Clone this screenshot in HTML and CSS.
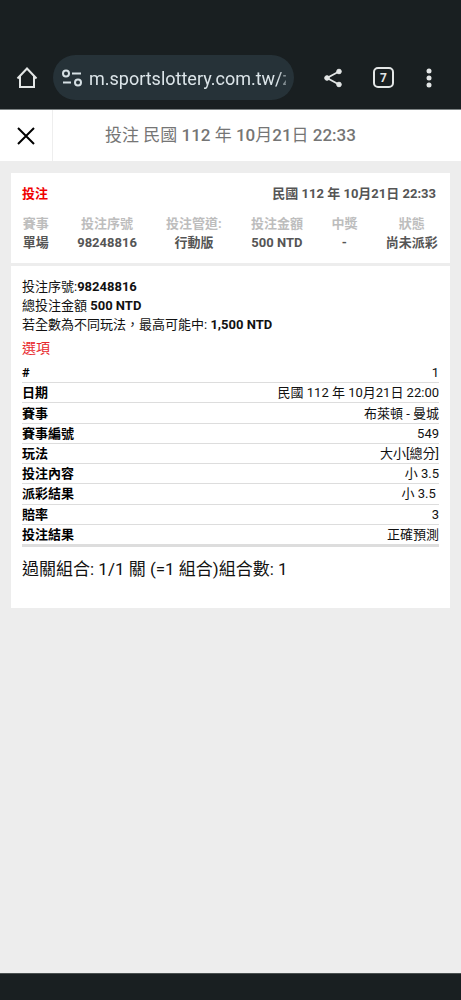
FILE: index.html
```html
<!DOCTYPE html>
<html lang="zh-Hant">
<head>
<meta charset="utf-8">
<meta name="viewport" content="width=device-width, initial-scale=1">
<title>投注</title>
<link rel="stylesheet" href="styles.css">
</head>
<body>
<div class="screen">
  <header class="browser-bar">
    <button class="icon-button home" type="button" aria-label="Home">
      <svg width="22" height="24" viewBox="0 0 22 24" fill="none" stroke="#e3e6e6" stroke-width="2"><path d="M4 10.500V21h14V10.500M1.500 12.500 11 2.500l9.500 10"/></svg>
    </button>
    <div class="address">
      <svg class="site-icon" width="22" height="18" viewBox="0 0 22 18" fill="none" stroke="#d6e0e4" stroke-width="2"><circle cx="5" cy="4.500" r="3"/><path d="M11 4.500h9M2 13.500h8"/><circle cx="17" cy="13.500" r="3"/></svg>
      <input class="url" type="text" aria-label="URL" value="m.sportslottery.com.tw/zh">
    </div>
    <button class="icon-button share" type="button" aria-label="Share">
      <svg width="20" height="20" viewBox="0 0 20 20" fill="#e3e6e6" stroke="#e3e6e6"><path d="M16 3.500 4 10l12 6.500" fill="none" stroke-width="1.800"/><circle cx="16" cy="3.500" r="2.300"/><circle cx="4" cy="10" r="2.300"/><circle cx="16" cy="16.500" r="2.300"/></svg>
    </button>
    <button class="icon-button tabs" type="button" aria-label="Tabs">7</button>
    <button class="icon-button more" type="button" aria-label="More">
      <svg width="6" height="20" viewBox="0 0 6 20" fill="#e3e6e6"><circle cx="3" cy="3" r="2.500"/><circle cx="3" cy="10" r="2.500"/><circle cx="3" cy="17" r="2.500"/></svg>
    </button>
  </header>

  <div class="page-header">
    <button class="close" type="button" aria-label="Close">
      <svg width="18" height="18" viewBox="0 0 18 18" fill="none" stroke="#000" stroke-width="2"><path d="m1 1 16 16M17 1 1 17"/></svg>
    </button>
    <h1 class="page-title">投注 民國 <b>112</b> 年 <b>10</b>月<b>21</b>日 <b>22:33</b></h1>
  </div>

  <main class="content">
    <article class="ticket">
      <section class="summary">
        <div class="summary-top">
          <h2 class="kind">投注</h2>
          <time class="placed">民國 112 年 10月21日 22:33</time>
        </div>
        <table class="overview">
          <thead>
            <tr><th>賽事</th><th>投注序號</th><th>投注管道:</th><th>投注金額</th><th>中獎</th><th>狀態</th></tr>
          </thead>
          <tbody>
            <tr><td>單場</td><td>98248816</td><td>行動版</td><td>500 NTD</td><td>-</td><td>尚未派彩</td></tr>
          </tbody>
        </table>
      </section>
      <section class="details">
        <p class="line">投注序號:<b>98248816</b></p>
        <p class="line">總投注金額 <b>500 NTD</b></p>
        <p class="line">若全數為不同玩法，最高可能中: <b>1,500 NTD</b></p>
        <h3 class="options-title">選項</h3>
        <table class="options">
          <tbody>
            <tr><th scope="row">#</th><td>1</td></tr>
            <tr><th scope="row">日期</th><td>民國 112 年 10月21日 22:00</td></tr>
            <tr><th scope="row">賽事</th><td>布萊頓 - 曼城</td></tr>
            <tr><th scope="row">賽事編號</th><td>549</td></tr>
            <tr><th scope="row">玩法</th><td>大小[總分]</td></tr>
            <tr><th scope="row">投注內容</th><td>小 3.5</td></tr>
            <tr><th scope="row">派彩結果</th><td>小 3.5&nbsp;</td></tr>
            <tr><th scope="row">賠率</th><td>3</td></tr>
            <tr><th scope="row">投注結果</th><td>正確預測</td></tr>
          </tbody>
        </table>
        <p class="combination">過關組合: 1/1 關 (=1 組合)組合數: 1</p>
      </section>
    </article>
  </main>
  <footer class="system-bar"></footer>
</div>
</body>
</html>
```
FILE: styles.css
```css
* {
  box-sizing: border-box;
}

body {
  margin: 0;
  background: #ededed;
  color: #111;
  font-family: Roboto, "Noto Sans CJK TC", sans-serif;
  font-size: 13px;
  line-height: 19px;
}

h1, h2, h3, p {
  margin: 0;
}

button {
  padding: 0;
  border: 0;
  background: none;
  font-family: inherit;
}

table {
  width: 100%;
  border-collapse: collapse;
}

th, td {
  padding: 0;
}

.screen {
  display: flex;
  flex-direction: column;
  min-height: 100vh;
}

.browser-bar {
  display: flex;
  align-items: center;
  padding: 55px 23px 9px 15px;
  border-bottom: 1px solid #7d8384;
  background: #191f21;
}

.icon-button {
  display: flex;
  align-items: center;
  justify-content: center;
  flex: none;
}

.home {
  width: 24px;
}

.address {
  display: flex;
  align-items: center;
  flex: 1;
  gap: 6px;
  min-width: 0;
  height: 45px;
  margin-left: 14px;
  padding: 0 8px;
  border-radius: 23px;
  background: #263238;
}

.site-icon {
  flex: none;
}

.url {
  flex: 1;
  min-width: 0;
  height: 30px;
  padding: 2px 0 0;
  border: 0;
  outline: 0;
  background: none;
  color: #dce5e9;
  font-family: Roboto, sans-serif;
  font-size: 18px;
  mask-image: linear-gradient(to right, #000 96%, #0006);
}

.share {
  width: 20px;
  margin-left: 29px;
}

.tabs {
  width: 21px;
  height: 21px;
  margin-left: 30px;
  border: 2px solid #e3e6e6;
  border-radius: 5px;
  color: #e3e6e6;
  font-size: 12px;
  font-weight: 700;
}

.more {
  width: 18px;
  margin-left: 26px;
}

.page-header {
  display: flex;
  height: 51px;
  background: #fff;
}

.close {
  display: flex;
  align-items: center;
  justify-content: center;
  flex: none;
  width: 53px;
  border-right: 1px solid #eee;
}

.page-title {
  flex: 1;
  margin-right: 53px;
  color: #757575;
  font-size: 17px;
  font-weight: 400;
  line-height: 50px;
  text-align: center;
}

.page-title b {
  font-weight: 500;
}

.content {
  flex: 1;
  padding: 12px 11px;
}

.ticket {
  background: #fff;
}

.summary {
  padding: 11px 11px 11px;
  border-bottom: 3px solid #ededed;
  color: #555;
}

.summary-top {
  display: flex;
  justify-content: space-between;
  margin-bottom: 11px;
}

.kind {
  color: #f00000;
  font-size: 13px;
  font-weight: 700;
}

.placed {
  margin-right: 3px;
  font-weight: 700;
}

.overview th,
.overview td {
  padding: 0 13px;
  font-weight: 700;
  text-align: center;
  white-space: nowrap;
}

.overview th {
  color: #bdbdbd;
}

.overview th:first-child,
.overview td:first-child {
  padding-left: 0;
}

.overview th:last-child,
.overview td:last-child {
  padding-right: 0;
}

.details {
  padding: 11px 11px 27px;
}

.options-title {
  margin: 3px 0 4px;
  color: #e8262b;
  font-size: 14px;
  font-weight: 400;
  line-height: 22px;
}

.options {
  height: 184px;
  border-bottom: 3px solid #ddd;
}

.options tr + tr {
  border-top: 1px solid #ddd;
}

.options th {
  color: #000;
  font-weight: 700;
  text-align: left;
}

.options td {
  text-align: right;
}

.combination {
  margin-top: 10px;
  font-size: 17px;
  line-height: 24px;
}

.system-bar {
  height: 27px;
  border-top: 1px solid #4a5050;
  background: #191f21;
}
```
